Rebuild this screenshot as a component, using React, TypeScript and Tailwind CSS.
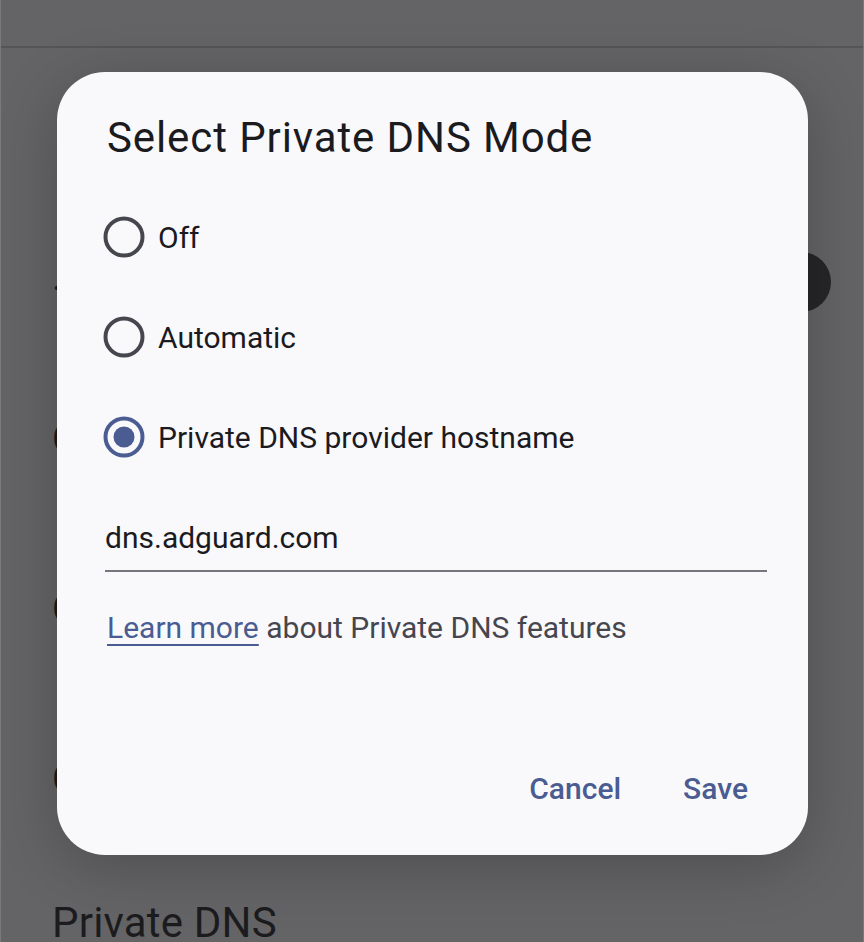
const font = { fontFamily: 'Roboto, "Noto Sans", sans-serif' }

function Radio({ checked }: { checked?: boolean }) {
  return (
    <svg width="42" height="42" viewBox="0 0 42 42" className="shrink-0">
      <circle cx="21" cy="21" r="18.5" fill="none" stroke={checked ? '#4a5c92' : '#46464f'} strokeWidth="4" />
      {checked && <circle cx="21" cy="21" r="10.5" fill="#4a5c92" />}
    </svg>
  )
}

const options = ['Off', 'Automatic', 'Private DNS provider hostname']

export default function App() {
  return (
    <div className="relative w-[864px] h-[942px] overflow-hidden bg-[#646466] border-x border-[#7a7a7c]" style={font}>
      {/* dimmed settings page behind the dialog */}
      <div className="flex flex-col">
        <div className="h-[46px] relative">
          <span className="absolute left-[94px] top-[-43px] text-[38px] text-[#2a2a2c]">Gmail</span>
        </div>
        <div className="h-[2px] bg-[#555557]" />
        <div className="flex flex-col pl-[51px] text-[38px] text-[#1c1c1e] leading-[46px]">
          <div className="mt-[218px]">· Airplane mode</div>
          <div className="mt-[104px]">Calls &amp; SMS</div>
          <div className="mt-[124px]">Connection sharing</div>
          <div className="mt-[124px]">Clear data</div>
          <div className="mt-[96px] text-[42px] leading-[50px] tracking-[0.2px]">Private DNS</div>
        </div>
        <div className="absolute left-[770px] top-[252px] w-[60px] h-[60px] rounded-full bg-[#262628]" />
      </div>

      {/* dialog */}
      <div className="absolute left-[56px] top-[72px] w-[751px] h-[783px] rounded-[48px] bg-[#f9f9fc] shadow-[0_12px_60px_rgba(0,0,0,0.22)] flex flex-col">
        <h1 className="pt-[42px] pl-[50px] text-[42px] leading-[48px] tracking-[0.9px] text-[#1b1b1f]">Select Private DNS Mode</h1>

        <div className="mt-[25px] flex flex-col pl-[46px]">
          {options.map((o, i) => (
            <div key={o} className="h-[100px] flex items-center gap-[13px]">
              <Radio checked={i === 2} />
              <span className="text-[30px] text-[#1b1b1f]">{o}</span>
            </div>
          ))}
        </div>

        <div className="mt-[31px] ml-[48px] mr-[41px]">
          <div className="text-[30px] leading-[40px] text-[#1b1b1f]">dns.adguard.com</div>
          <div className="mt-[12px] h-[2px] bg-[#76767f]" />
        </div>

        <p className="mt-[36px] ml-[50px] text-[30px] leading-[40px] text-[#46464f]">
          <span className="text-[#4a5c92] underline underline-offset-[6px] decoration-2">Learn more</span> about Private DNS features
        </p>

        <div className="mt-auto pb-[46px] pr-[60px] flex justify-end gap-[62px] text-[30px] leading-[40px] font-medium text-[#4a5c92]">
          <button>Cancel</button>
          <button>Save</button>
        </div>
      </div>
    </div>
  )
}
